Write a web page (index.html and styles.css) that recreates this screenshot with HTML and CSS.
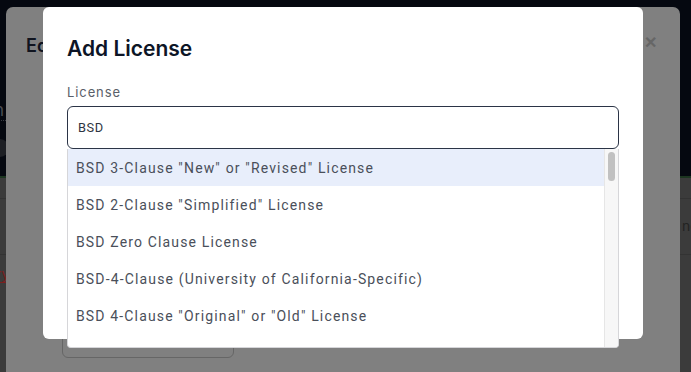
FILE: index.html
```html
<!DOCTYPE html>
<html>
<head>
<meta charset="utf-8">
<link rel="stylesheet" href="styles.css">
</head>
<body>
<div class="page">
  <header class="page-header">
    <span class="hdr-link">h</span>
    <span class="hdr-dot"></span>
  </header>
  <main class="page-content">
    <div class="row-line"></div>
    <div class="row-text">nc</div>
    <div class="row-line"></div>
    <div class="row-tag">ry</div>
  </main>
</div>

<div class="modal-back">
  <div class="back-title">Edit</div>
  <div class="back-close">&#x2715;</div>
  <div class="back-field"></div>
</div>

<div class="modal">
  <h2 class="modal-title">Add License</h2>
  <label class="field-label">License</label>
  <div class="combo">
    <div class="combo-input">BSD</div>
    <div class="dropdown">
      <ul class="options">
        <li class="option active">BSD 3-Clause "New" or "Revised" License</li>
        <li class="option">BSD 2-Clause "Simplified" License</li>
        <li class="option">BSD Zero Clause License</li>
        <li class="option">BSD-4-Clause (University of California-Specific)</li>
        <li class="option">BSD 4-Clause "Original" or "Old" License</li>
        <li class="option">BSD 1-Clause License</li>
      </ul>
      <div class="scrollbar"><div class="thumb"></div></div>
    </div>
  </div>
</div>
</body>
</html>
```
FILE: styles.css
```css
* { box-sizing: border-box; }
html, body { margin: 0; padding: 0; overflow: hidden; }
body {
  width: 691px;
  height: 372px;
  position: relative;
  font-family: Inter, "Noto Sans", sans-serif;
  background: #3b3b3b;
}
.page { display: flex; flex-direction: column; height: 372px; }
.page-header {
  height: 178px;
  flex: none;
  background: #050810;
  border-bottom: 2px solid #1c3520;
  padding: 100px 0 0 0;
  display: flex;
  flex-direction: column;
  gap: 18px;
}
.hdr-link {
  color: #4a4d55;
  font-size: 17px;
  margin-left: -6px;
  border-bottom: 1px dotted #3a3d44;
  width: 12px;
  line-height: 20px;
}
.hdr-dot {
  width: 18px; height: 18px; border-radius: 50%;
  background: #1d1f24; margin-left: -9px;
}
.page-content {
  flex: 1;
  background: #3b3b3b;
  display: flex;
  flex-direction: column;
}
.row-line { height: 1px; background: #333; margin-top: 20px; }
.row-text {
  color: #222; font-size: 14px; margin-left: 682px; margin-top: 18px;
}
.row-tag {
  color: #7a1f1f; font-size: 14px; margin-left: -4px; margin-top: 10px;
  border-bottom: 1px solid #7a1f1f; width: 12px;
}

.modal-back {
  position: absolute;
  left: 6px; top: 7px;
  width: 674px; height: 365px;
  background: #808080;
  border-radius: 7px 7px 0 0;
}
.back-title {
  position: absolute;
  left: 20px; top: 28px;
  font-size: 18px; font-weight: 600;
  color: #10141f;
}
.back-close {
  position: absolute;
  right: 23px; top: 25px;
  font-size: 16px; font-weight: 700;
  color: #666;
}
.back-field {
  position: absolute;
  left: 56px; top: 300px;
  width: 172px; height: 51px;
  border: 1px solid #666;
  border-radius: 6px;
}

.modal {
  position: absolute;
  left: 43px; top: 7px;
  width: 600px; height: 332px;
  background: #fff;
  border-radius: 6px;
  padding: 28px 24px 0 24px;
}
.modal-title {
  margin: 0;
  font-family: Inter, sans-serif;
  font-weight: 600;
  font-size: 21px;
  line-height: 28px;
  color: #0d1526;
}
.field-label {
  display: block;
  margin-top: 20px;
  font-size: 13px;
  line-height: 18px;
  letter-spacing: 0.9px;
  color: #5a5f6a;
}
.combo { position: relative; margin-top: 5px; }
.combo-input {
  height: 43px;
  border: 1px solid #2b3446;
  border-radius: 6px;
  padding: 0 10px;
  display: flex;
  align-items: center;
  font-family: Roboto, sans-serif;
  font-size: 12.8px;
  letter-spacing: 0.6px;
  color: #2f3542;
}
.dropdown {
  position: absolute;
  left: 0; top: 43px;
  width: 552px; height: 199px;
  background: #fff;
  border: 1px solid #d6d6d9;
  border-top: none;
  border-radius: 0 0 4px 4px;
  overflow: hidden;
  display: flex;
}
.options {
  list-style: none;
  margin: 0; padding: 0;
  flex: 1;
}
.option {
  height: 37px;
  display: flex;
  align-items: center;
  padding-left: 8px;
  font-family: Roboto, sans-serif;
  font-size: 14px;
  letter-spacing: 1.15px;
  color: #4a4f5a;
  white-space: nowrap;
}
.option.active { background: #e8eefb; }
.scrollbar {
  width: 14px;
  flex: none;
  background: #f7f7f7;
  border-left: 1px solid #e6e6e6;
  padding: 3px 3px 0 3px;
}
.thumb {
  height: 29px;
  background: #c1c1c1;
  border-radius: 4px;
}
```
